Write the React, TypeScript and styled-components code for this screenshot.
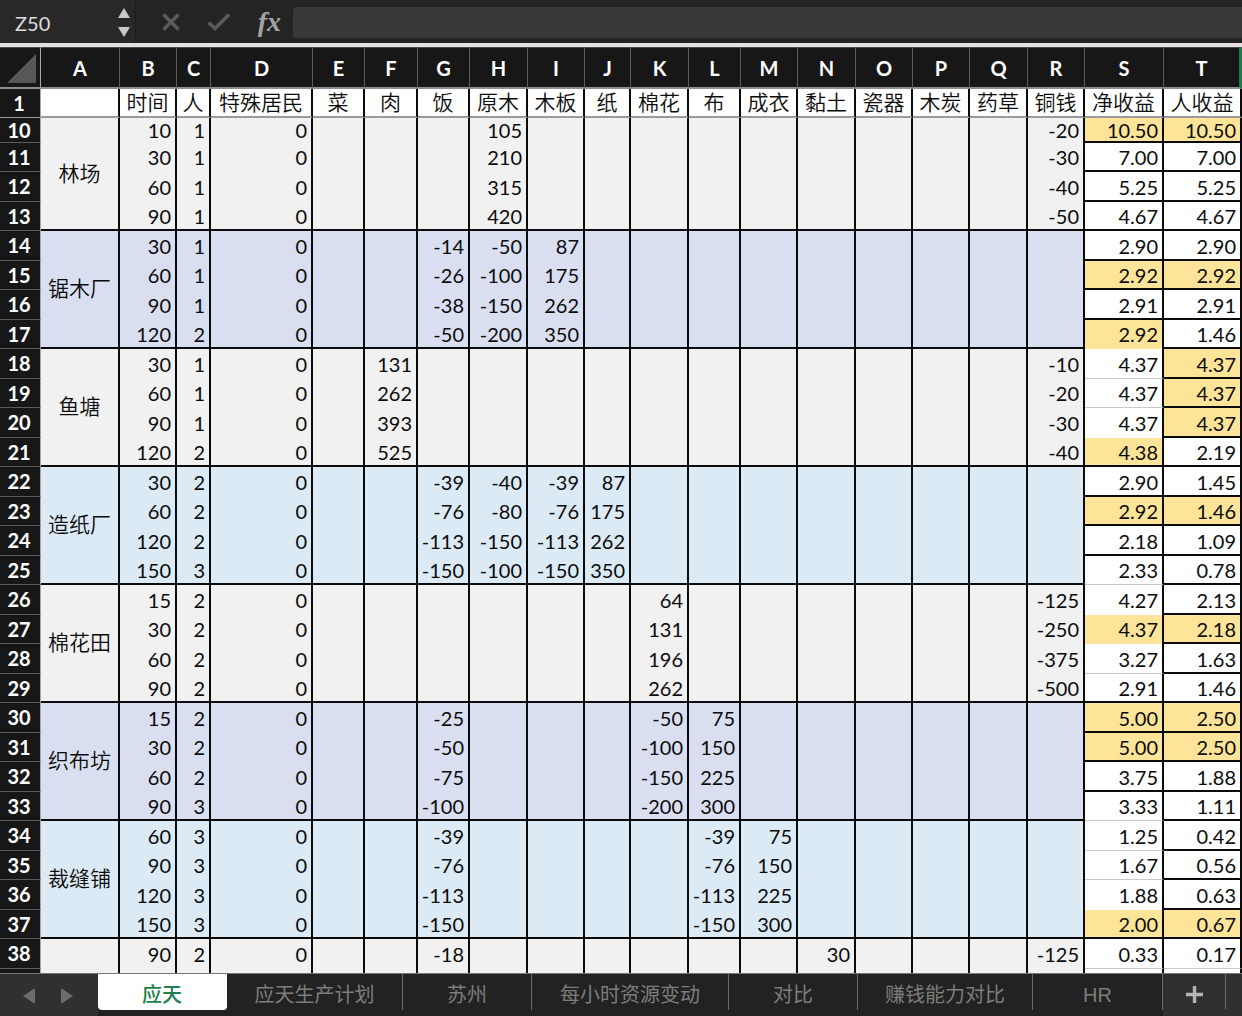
import React, { useState } from "react";
import styled, { createGlobalStyle, css } from "styled-components";

const latin = `Lato, "Noto Sans CJK SC", sans-serif`;
const ink = "#0b0b0b";
const chrome = "#171717";
const gridline = "#c9c9c9";

const GlobalStyle = createGlobalStyle`
  *, *::before, *::after { box-sizing: border-box; }
  body { margin: 0; background: #303030; font-family: ${latin}; }
  button, input { font: inherit; color: inherit; }
`;

const Workbook = styled.main`
  display: flex;
  flex-direction: column;
  height: 100vh;
  overflow: hidden;
`;

/* Formula bar */

const FormulaBar = styled.header`
  display: flex;
  flex: none;
  height: 47px;
  background: #242424;
  border-bottom: 4px solid #e4e0e2;
`;

const NameBox = styled.div`
  display: flex;
  align-items: center;
  width: 136px;
  padding: 0 5px 0 15px;
  background: #282828;
  border-right: 1px solid #1c1c1c;
`;

const NameInput = styled.input`
  flex: 1;
  min-width: 0;
  padding: 2px 0 0;
  border: 0;
  outline: 0;
  background: transparent;
  color: #dedede;
  font-size: 20px;
  line-height: 24px;
`;

const Stepper = styled.div`
  display: flex;
  flex-direction: column;
  gap: 9px;
  padding-top: 2px;
`;

const IconButton = styled.button`
  display: flex;
  align-items: center;
  justify-content: center;
  padding: 0;
  border: 0;
  background: transparent;
  color: #c9c9c9;
`;

const FormulaActions = styled.div`
  display: flex;
  align-items: center;
  justify-content: space-between;
  width: 157px;
  padding: 1px 12px 0 26px;
`;

const ActionButton = styled(IconButton)`
  color: #5a5a5a;
`;

const FxButton = styled(IconButton)`
  color: #a2a2a2;
  font-family: "Liberation Serif", serif;
  font-style: italic;
  font-weight: 700;
  font-size: 28px;
  line-height: 32px;
`;

const FormulaInput = styled.input`
  flex: 1;
  min-width: 0;
  margin: 7px 0 5px;
  padding: 0 8px;
  border: 0;
  border-radius: 4px 0 0 4px;
  outline: 0;
  background: #383838;
  color: #dedede;
  font-size: 20px;
`;

/* Grid */

const SheetArea = styled.section`
  flex: 1;
  min-height: 0;
  overflow: hidden;
  background: #fff;
`;

const Grid = styled.table`
  width: 100%;
  min-width: 1242px;
  table-layout: fixed;
  border-collapse: separate;
  border-spacing: 0;
  color: ${ink};
  font-size: 20px;
  line-height: 21px;
`;

const ColumnHead = styled.th<{ $edge?: string }>`
  height: 42px;
  padding: 1px 0 0;
  background: ${chrome};
  border-right: ${(p) => (p.$edge ? `3px solid ${p.$edge}` : "1px solid #5c5c5c")};
  border-top: 1px solid #4a4a4a;
  border-bottom: 2px solid #8f8f8f;
  color: #fff;
  font-weight: 700;
`;

const Corner = styled(ColumnHead)`
  padding: 6px 4px 4px 7px;
  border-right: 1px solid #a8a8a8;
  vertical-align: bottom;

  svg { display: block; }
`;

const RowHead = styled.th<{ $frozen?: boolean }>`
  padding: 0 2px 0 0;
  background: ${chrome};
  border-right: 1px solid #a8a8a8;
  border-bottom: 1px solid ${(p) => (p.$frozen ? "#9a9a9a" : "#5c5c5c")};
  color: #fff;
  font-weight: 700;
`;

const songLabel = css`
  font-family: "Noto Sans CJK SC", sans-serif;
  font-size: 21px;
  font-weight: 350;
  line-height: 24px;
  white-space: nowrap;
`;

const FieldName = styled.th`
  height: 29px;
  padding: 0 0 3px;
  background: #fff;
  border-right: 2px solid ${ink};
  border-bottom: 2px solid #9a9a9a;
  ${songLabel}
`;

const Row = styled.tr<{ $height: number }>`
  height: ${(p) => p.$height}px;
`;

type Line = "none" | "faint" | "solid";

/* The top padding balances the line, so that a row's numbers share one baseline. */
const lines = {
  none: css`border-bottom: 0;`,
  faint: css`padding-top: 1px; border-bottom: 1px solid ${gridline};`,
  solid: css`padding-top: 2px; border-bottom: 2px solid ${ink};`,
};

const Cell = styled.td<{ $fill: string; $line: Line }>`
  padding: 0 4px 0 0;
  background: ${(p) => p.$fill};
  border-right: 2px solid ${ink};
  ${(p) => lines[p.$line]}
  text-align: right;
  vertical-align: middle;
  white-space: nowrap;
`;

const BuildingName = styled.th<{ $fill: string; $open: boolean }>`
  padding: 0 0 4px;
  background: ${(p) => p.$fill};
  border-right: 2px solid ${ink};
  border-bottom: ${(p) => (p.$open ? "0" : `2px solid ${ink}`)};
  ${songLabel}
`;

/* Sheet tabs */

const TabBar = styled.nav`
  display: flex;
  flex: none;
  height: 43px;
  background: #222;
  border-top: 1px solid #767676;
`;

const TabScroll = styled.div`
  display: flex;
  align-items: center;
  justify-content: space-between;
  width: 98px;
  padding: 2px 25px 0 23px;
  background: #303030;
`;

const TabArrow = styled(IconButton)`
  color: #6c6c6c;
`;

const Tab = styled.button<{ $width: number; $active: boolean }>`
  flex: 0 0 ${(p) => p.$width}px;
  height: 36px;
  padding: 5px 0 0;
  border: 0;
  border-right: 1px solid ${(p) => (p.$active ? "#fff" : "#6a6a6a")};
  border-radius: ${(p) => (p.$active ? "0 0 4px 4px" : "0")};
  background: ${(p) => (p.$active ? "#fff" : "transparent")};
  color: ${(p) => (p.$active ? "#217f4b" : "#7d7d7d")};
  font-family: "Liberation Sans", "Noto Sans CJK SC", sans-serif;
  font-size: 20px;
  font-weight: ${(p) => (p.$active ? 500 : 400)};
  line-height: 30px;
  white-space: nowrap;
`;

const AddArea = styled.div`
  display: flex;
  flex: 1;
  background: #303030;
`;

const AddButton = styled(IconButton)`
  width: 63px;
  height: 35px;
  padding-top: 6px;
  border-right: 1px solid #6a6a6a;
  color: #b4b4b4;
`;

const columns = [
  ["A", 79, ""], ["B", 57, "时间"], ["C", 34, "人"], ["D", 102, "特殊居民"],
  ["E", 52, "菜"], ["F", 53, "肉"], ["G", 52, "饭"], ["H", 58, "原木"],
  ["I", 57, "木板"], ["J", 46, "纸"], ["K", 58, "棉花"], ["L", 52, "布"],
  ["M", 57, "成衣"], ["N", 58, "黏土"], ["O", 57, "瓷器"], ["P", 57, "木炭"],
  ["Q", 58, "药草"], ["R", 57, "铜钱"], ["S", 79, "净收益"], ["T", 78, "人收益"],
] as const;

const inner = "BCDEFGHIJKLMNOPQR".split("");

type Values = Record<string, number>;
/* [values, net income, income per person, highlighted columns, lines under S and T] */
type Entry = [Values, string, string, string, string];
type Group = { name: string; fill: string; rows: Entry[] };

const grey = "#f1f1f1";
const violet = "#d9dff0";
const blue = "#dceaf6";
const gold = "#fde499";

const groups: Group[] = [
  { name: "林场", fill: grey, rows: [
    [{ B: 10, C: 1, H: 105, R: -20 }, "10.50", "10.50", "ST", "ST"],
    [{ B: 30, C: 1, H: 210, R: -30 }, "7.00", "7.00", "", "ST"],
    [{ B: 60, C: 1, H: 315, R: -40 }, "5.25", "5.25", "", "ST"],
    [{ B: 90, C: 1, H: 420, R: -50 }, "4.67", "4.67", "", "ST"],
  ] },
  { name: "锯木厂", fill: violet, rows: [
    [{ B: 30, C: 1, G: -14, H: -50, I: 87 }, "2.90", "2.90", "", "ST"],
    [{ B: 60, C: 1, G: -26, H: -100, I: 175 }, "2.92", "2.92", "ST", "ST"],
    [{ B: 90, C: 1, G: -38, H: -150, I: 262 }, "2.91", "2.91", "", "ST"],
    [{ B: 120, C: 2, G: -50, H: -200, I: 350 }, "2.92", "1.46", "S", "T"],
  ] },
  { name: "鱼塘", fill: grey, rows: [
    [{ B: 30, C: 1, F: 131, R: -10 }, "4.37", "4.37", "T", "T"],
    [{ B: 60, C: 1, F: 262, R: -20 }, "4.37", "4.37", "T", "T"],
    [{ B: 90, C: 1, F: 393, R: -30 }, "4.37", "4.37", "T", "T"],
    [{ B: 120, C: 2, F: 525, R: -40 }, "4.38", "2.19", "S", "ST"],
  ] },
  { name: "造纸厂", fill: blue, rows: [
    [{ B: 30, C: 2, G: -39, H: -40, I: -39, J: 87 }, "2.90", "1.45", "", "ST"],
    [{ B: 60, C: 2, G: -76, H: -80, I: -76, J: 175 }, "2.92", "1.46", "ST", "ST"],
    [{ B: 120, C: 2, G: -113, H: -150, I: -113, J: 262 }, "2.18", "1.09", "", "ST"],
    [{ B: 150, C: 3, G: -150, H: -100, I: -150, J: 350 }, "2.33", "0.78", "", "T"],
  ] },
  { name: "棉花田", fill: grey, rows: [
    [{ B: 15, C: 2, K: 64, R: -125 }, "4.27", "2.13", "", "T"],
    [{ B: 30, C: 2, K: 131, R: -250 }, "4.37", "2.18", "ST", "T"],
    [{ B: 60, C: 2, K: 196, R: -375 }, "3.27", "1.63", "", "T"],
    [{ B: 90, C: 2, K: 262, R: -500 }, "2.91", "1.46", "", "ST"],
  ] },
  { name: "织布坊", fill: violet, rows: [
    [{ B: 15, C: 2, G: -25, K: -50, L: 75 }, "5.00", "2.50", "ST", "ST"],
    [{ B: 30, C: 2, G: -50, K: -100, L: 150 }, "5.00", "2.50", "ST", "ST"],
    [{ B: 60, C: 2, G: -75, K: -150, L: 225 }, "3.75", "1.88", "", "ST"],
    [{ B: 90, C: 3, G: -100, K: -200, L: 300 }, "3.33", "1.11", "", "T"],
  ] },
  { name: "裁缝铺", fill: blue, rows: [
    [{ B: 60, C: 3, G: -39, L: -39, M: 75 }, "1.25", "0.42", "", "T"],
    [{ B: 90, C: 3, G: -76, L: -76, M: 150 }, "1.67", "0.56", "", "T"],
    [{ B: 120, C: 3, G: -113, L: -113, M: 225 }, "1.88", "0.63", "", "T"],
    [{ B: 150, C: 3, G: -150, L: -150, M: 300 }, "2.00", "0.67", "ST", "ST"],
  ] },
  { name: "", fill: grey, rows: [
    [{ B: 90, C: 2, G: -18, N: 30, R: -125 }, "0.33", "0.17", "", ""],
  ] },
];

const tabs: [string, number][] = [
  ["应天", 129], ["应天生产计划", 176], ["苏州", 129], ["每小时资源变动", 197],
  ["对比", 129], ["赚钱能力对比", 175], ["HR", 130],
];

function GroupRows({ group, first }: { group: Group; first: number }) {
  const resultCell = (key: "S" | "T", text: string, i: number) => {
    const [, , , marked, ruled] = group.rows[i];
    const fill = marked.includes(key) ? gold : "#fff";
    const nextMarked = group.rows[i + 1]?.[3].includes(key);
    const line: Line = ruled.includes(key)
      ? "solid"
      : marked.includes(key) || nextMarked ? "none" : "faint";
    return <Cell $fill={fill} $line={line}>{text}</Cell>;
  };

  return (
    <tbody>
      {group.rows.map(([values, net, each], i) => {
        const n = first + i;
        const last = i === 3;
        return (
          <Row key={n} $height={n === 10 ? 25 : n % 2 === 0 ? 30 : 29}>
            <RowHead scope="row">{n}</RowHead>
            {i === 0 && (
              <BuildingName
                scope="rowgroup"
                rowSpan={group.rows.length}
                $fill={group.fill}
                $open={group.rows.length < 4}
              >
                {group.name}
              </BuildingName>
            )}
            {inner.map((key) => (
              <Cell key={key} $fill={group.fill} $line={last ? "solid" : "none"}>
                {key === "D" ? 0 : values[key]}
              </Cell>
            ))}
            {resultCell("S", net, i)}
            {resultCell("T", each, i)}
          </Row>
        );
      })}
    </tbody>
  );
}

export default function App() {
  const [cell, setCell] = useState("Z50");
  const [formula, setFormula] = useState("");
  const [active, setActive] = useState("应天");

  return (
    <>
      <GlobalStyle />
      <Workbook>
        <FormulaBar>
          <NameBox>
            <NameInput aria-label="名称框" value={cell} onChange={(e) => setCell(e.target.value)} />
            <Stepper>
              <IconButton aria-label="上一个">
                <svg width="12" height="10" viewBox="0 0 12 10"><path d="M6 0 12 10H0Z" fill="currentColor" /></svg>
              </IconButton>
              <IconButton aria-label="下一个">
                <svg width="12" height="10" viewBox="0 0 12 10"><path d="M0 0H12L6 10Z" fill="currentColor" /></svg>
              </IconButton>
            </Stepper>
          </NameBox>
          <FormulaActions>
            <ActionButton aria-label="取消">
              <svg width="18" height="18" viewBox="0 0 18 18" fill="none" stroke="currentColor" strokeWidth="3.6">
                <path d="M1.5 1.5 16.5 16.5M16.5 1.5 1.5 16.5" />
              </svg>
            </ActionButton>
            <ActionButton aria-label="确认">
              <svg width="24" height="18" viewBox="0 0 24 18" fill="none" stroke="currentColor" strokeWidth="3.6">
                <path d="M1.5 9.5 8 15.5 22 1.5" />
              </svg>
            </ActionButton>
            <FxButton aria-label="插入函数">fx</FxButton>
          </FormulaActions>
          <FormulaInput aria-label="编辑栏" value={formula} onChange={(e) => setFormula(e.target.value)} />
        </FormulaBar>

        <SheetArea>
          <Grid>
            <colgroup>
              <col style={{ width: 41 }} />
              {columns.map(([letter, width]) => <col key={letter} style={{ width }} />)}
            </colgroup>
            <thead>
              <tr>
                <Corner aria-label="全选">
                  <svg width="29" height="29" viewBox="0 0 29 29"><path d="M29 0V29H0Z" fill="#575757" /></svg>
                </Corner>
                {columns.map(([letter]) => (
                  <ColumnHead key={letter} scope="col" $edge={letter === "T" ? "#1f7a49" : undefined}>
                    {letter}
                  </ColumnHead>
                ))}
              </tr>
              <tr>
                <RowHead scope="row" $frozen>1</RowHead>
                {columns.map(([letter, , title]) => <FieldName key={letter}>{title}</FieldName>)}
              </tr>
            </thead>
            {groups.map((group, i) => <GroupRows key={i} group={group} first={10 + i * 4} />)}
            <tbody>
              <Row $height={29}>
                <RowHead scope="row" />
                <Cell $fill={grey} $line="none" />
                {inner.map((key) => <Cell key={key} $fill={grey} $line="none" />)}
                <Cell $fill="#fff" $line="faint" />
                <Cell $fill="#fff" $line="faint" />
              </Row>
            </tbody>
          </Grid>
        </SheetArea>

        <TabBar aria-label="工作表">
          <TabScroll>
            <TabArrow aria-label="向左滚动">
              <svg width="12" height="16" viewBox="0 0 12 16"><path d="M12 0V16L0 8Z" fill="currentColor" /></svg>
            </TabArrow>
            <TabArrow aria-label="向右滚动">
              <svg width="12" height="16" viewBox="0 0 12 16"><path d="M0 0V16L12 8Z" fill="currentColor" /></svg>
            </TabArrow>
          </TabScroll>
          {tabs.map(([name, width]) => (
            <Tab key={name} $width={width} $active={active === name} onClick={() => setActive(name)}>
              {name}
            </Tab>
          ))}
          <AddArea>
            <AddButton aria-label="新建工作表">
              <svg width="17" height="17" viewBox="0 0 17 17" fill="none" stroke="currentColor" strokeWidth="3.4">
                <path d="M8.5 0V17M0 8.5H17" />
              </svg>
            </AddButton>
          </AddArea>
        </TabBar>
      </Workbook>
    </>
  );
}
